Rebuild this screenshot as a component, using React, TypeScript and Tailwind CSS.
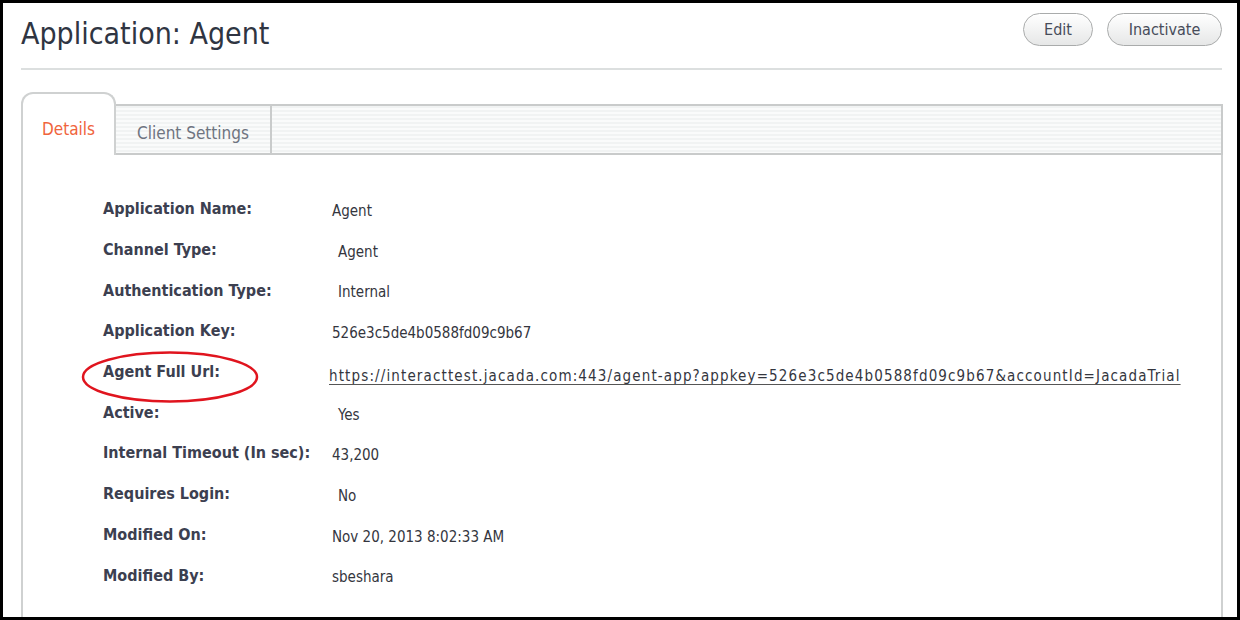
import React from "react";

const rows: { label: string; value: string; indent?: boolean; url?: boolean }[] = [
  { label: "Application Name:", value: "Agent" },
  { label: "Channel Type:", value: "Agent", indent: true },
  { label: "Authentication Type:", value: "Internal", indent: true },
  { label: "Application Key:", value: "526e3c5de4b0588fd09c9b67" },
  {
    label: "Agent Full Url:",
    value:
      "https://interacttest.jacada.com:443/agent-app?appkey=526e3c5de4b0588fd09c9b67&accountId=JacadaTrial",
    url: true,
  },
  { label: "Active:", value: "Yes", indent: true },
  { label: "Internal Timeout (In sec):", value: "43,200" },
  { label: "Requires Login:", value: "No", indent: true },
  { label: "Modified On:", value: "Nov 20, 2013 8:02:33 AM" },
  { label: "Modified By:", value: "sbeshara" },
];

export default function App() {
  return (
    <div className="relative w-[1240px] h-[620px] overflow-hidden border-[3px] border-black bg-white font-['DejaVu_Sans_Condensed','DejaVu_Sans',sans-serif] font-stretch-condensed">
      {/* Header */}
      <div className="flex h-[65px] items-start justify-between pl-[18px] pr-[15px]">
        <h1 className="mt-[16px] text-[30px] leading-[30px] text-[#2f3542]">Application: Agent</h1>
        <div className="mt-[10px] flex gap-[14px]">
          <button className="h-[33px] w-[70px] rounded-full border border-[#a9abab] bg-gradient-to-b from-white to-[#e6e7e7] text-[16px] text-[#474c5a] shadow-[inset_0_1px_0_#fff]">
            Edit
          </button>
          <button className="h-[33px] w-[115px] rounded-full border border-[#a9abab] bg-gradient-to-b from-white to-[#e6e7e7] text-[16px] text-[#474c5a] shadow-[inset_0_1px_0_#fff]">
            Inactivate
          </button>
        </div>
      </div>
      <div className="ml-[18px] mr-[15px] h-[2px] bg-[#dcdfdf]" />

      {/* Tabs + panel */}
      <div className="ml-[18px] mr-[14px] mt-[22px]">
        <div className="flex items-end">
          <div className="flex h-[63px] w-[95px] items-center justify-center rounded-t-[12px] border-2 border-b-0 border-[#cfd1d1] bg-white pt-[10px] text-[17px] text-[#f0643c]">
            Details
          </div>
          <div className="flex h-[51px] flex-1 border-y-2 border-r-2 border-[#c9cbcb] bg-[repeating-linear-gradient(to_bottom,#f1f3f3_0px,#f1f3f3_2px,#fafbfb_2px,#fafbfb_4px)]">
            <div className="flex w-[156px] items-center justify-center border-r-2 border-[#c9cbcb] pt-[8px] text-[17px] text-[#6e7480]">
              Client Settings
            </div>
          </div>
        </div>
        <div className="h-[470px] border-x-2 border-[#cfd1d1] pl-[80px] pt-[34px]">
          {rows.map((r) => (
            <div key={r.label} className="flex h-[40.7px] items-center">
              <div className="w-[229px] text-[16px] font-bold text-[#3c4050]">{r.label}</div>
              <div
                className={
                  "text-[15px] text-[#34363e] " +
                  (r.indent ? "pl-[6px] " : "") +
                  (r.url
                    ? "-ml-[3px] pt-[9px] tracking-[1.13px] underline underline-offset-[3px] decoration-[#555]"
                    : "pt-[4px]")
                }
              >
                {r.value}
              </div>
            </div>
          ))}
        </div>
      </div>

      {/* Red annotation ellipse */}
      <svg className="absolute left-[76px] top-[346px]" width="182" height="56" viewBox="0 0 182 56">
        <ellipse cx="91" cy="28" rx="87" ry="24.5" fill="none" stroke="#e0141e" strokeWidth="2.5" />
      </svg>
    </div>
  );
}
